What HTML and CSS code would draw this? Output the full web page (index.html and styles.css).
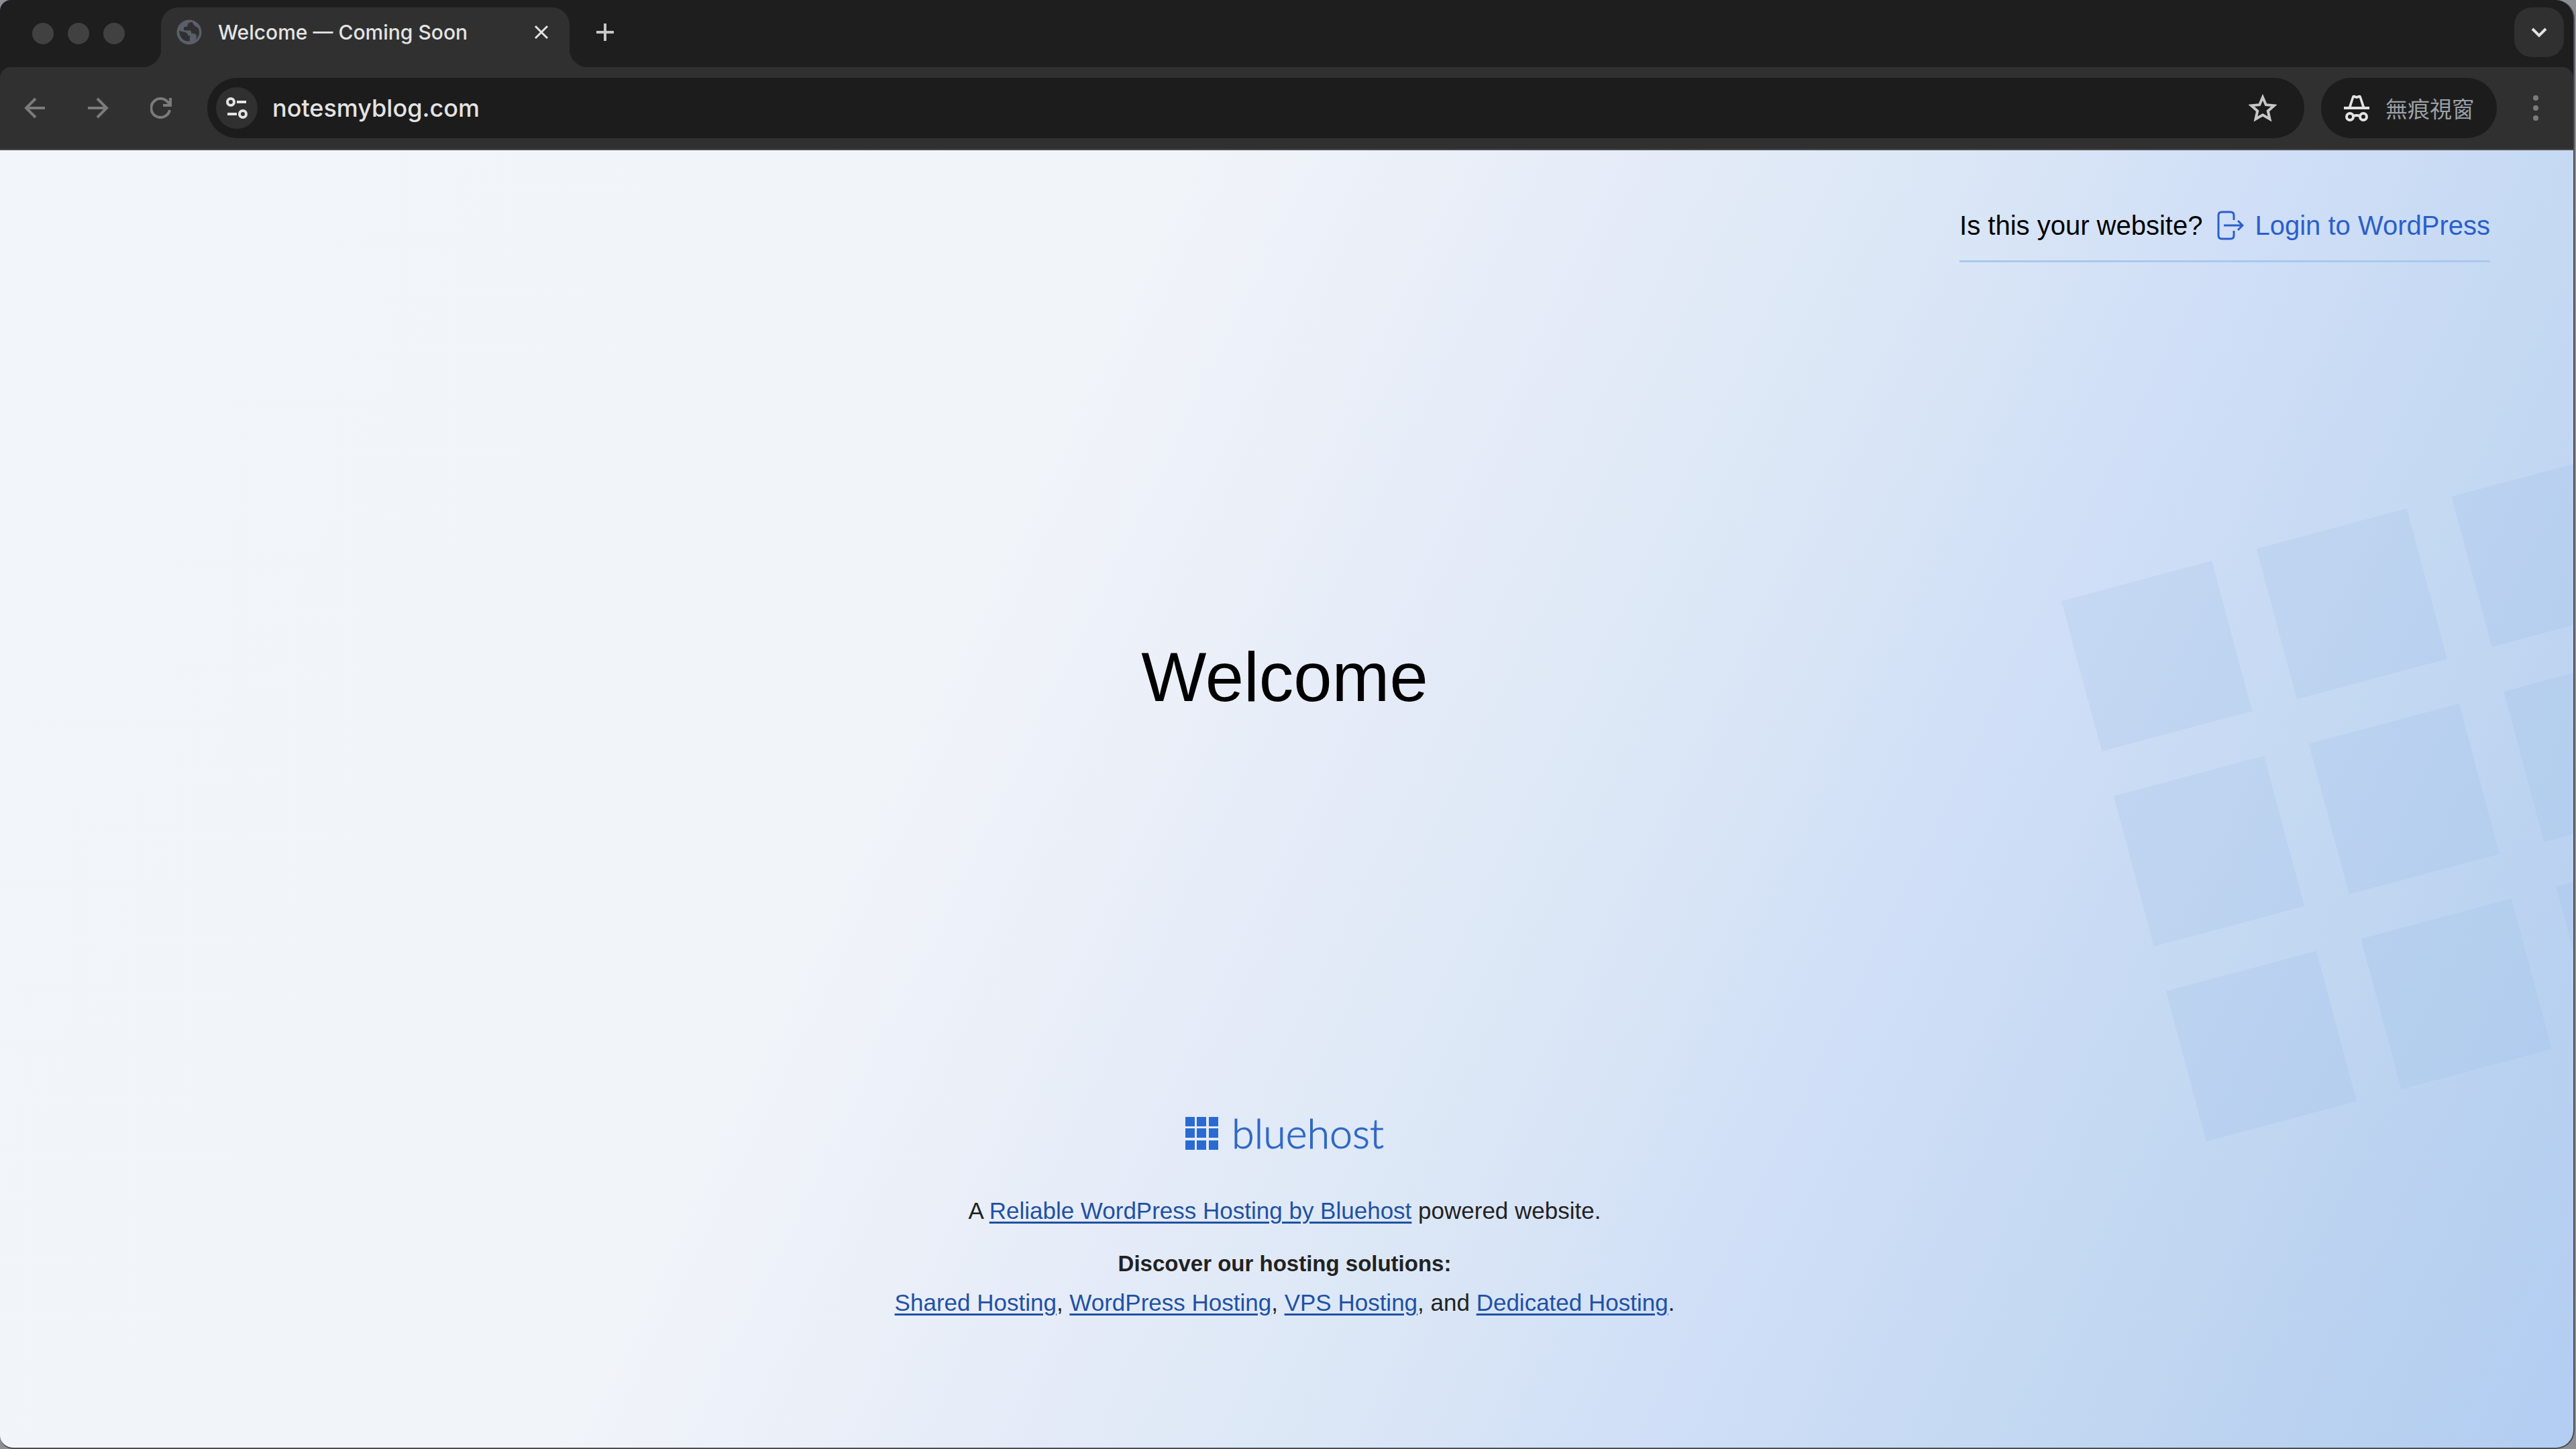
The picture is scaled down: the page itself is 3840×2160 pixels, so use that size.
FILE: index.html
```html
<!DOCTYPE html>
<html lang="en">

<head>
    <meta charset="utf-8">
    <title>Welcome — Coming Soon</title>
    <link rel="stylesheet" href="styles.css">
</head>

<body>
    <div class="window">
        <!-- tab strip -->
        <div class="tabs">
            <div class="lights">
                <span></span>
                <span></span>
                <span></span>
            </div>
            <div class="tab">
                <svg class="globe" viewBox="0 0 38 38">
                    <circle cx="19" cy="19" r="18.500" fill="#5b5f69" />
                    <path d="M4 17l9 2q4 1 4 5h3v8q-8 2-13-5q-3-5-3-10zM24 4q-6 0-7 3l-1 4q-5-1-5 2v3q5 1 9 0q3 2 2 5q7-1 8 4q0 4-3 6q7-4 7-12q0-4-2-7q-3 0-5-3q-3-2-3-5z" fill="#303030" />
                </svg>
                <span class="tab-title">Welcome — Coming Soon</span>
                <button class="tab-close" aria-label="Close tab">
                    <svg viewBox="0 0 22 22"><path d="M2 2l18 18M20 2L2 20" /></svg>
                </button>
            </div>
            <button class="new-tab" aria-label="New tab">
                <svg viewBox="0 0 28 28"><path d="M14 1v26M1 14h26" /></svg>
            </button>
            <button class="tab-search" aria-label="Search tabs">
                <svg viewBox="0 0 24 16"><path d="M2 3l10 10L22 3" /></svg>
            </button>
        </div>

        <!-- toolbar -->
        <div class="toolbar">
            <button class="nav" aria-label="Back">
                <svg viewBox="0 0 32 32"><path d="M31 16H3M17 2L3 16l14 14" /></svg>
            </button>
            <button class="nav" aria-label="Forward">
                <svg viewBox="0 0 32 32"><path d="M1 16h28M15 2l14 14-14 14" /></svg>
            </button>
            <button class="nav" aria-label="Reload">
                <svg viewBox="0 0 32 32"><path d="M29 19A14 14 0 1 1 26 7l4 4M30 1v11H19" /></svg>
            </button>
            <div class="omnibox">
                <button class="site-info" aria-label="Site information">
                    <svg viewBox="0 0 32 32"><circle cx="7" cy="7" r="5" /><path d="M16 7h14M2 25h14" /><circle cx="25" cy="25" r="5" /></svg>
                </button>
                <input class="url" type="text" value="notesmyblog.com" aria-label="Address">
                <button class="star" aria-label="Bookmark">
                    <svg viewBox="0 0 42 42"><path d="M21 5l4.800 11.200 12.200 1.100-9.200 8.100 2.700 12L21 31.200l-10.500 6.200 2.700-12L4 17.300l12.200-1.100z" /></svg>
                </button>
            </div>
            <button class="incognito">
                <svg viewBox="0 0 38 40">
                    <path class="fill" fill-rule="evenodd" d="M0 18h7l5-15q1-3 4-2l3 1 3-1q3-1 4 2l5 15h7v4H0zM11 18h16L23 5l-4 1-4-1z" />
                    <circle cx="9" cy="33" r="5" /><circle cx="29" cy="33" r="5" />
                    <path d="M14 32q5-2 10 0" />
                </svg>
                <span>無痕視窗</span>
            </button>
            <button class="menu" aria-label="Menu">
                <svg viewBox="0 0 8 38"><circle cx="4" cy="4" r="4" /><circle cx="4" cy="19" r="4" /><circle cx="4" cy="34" r="4" /></svg>
            </button>
        </div>

        <!-- coming soon page -->
        <div class="page">
            <svg class="pattern" viewBox="0 0 1022 1022">
                <g transform="translate(0 216) rotate(-15)">
                    <path d="M0 0h232v232H0zM301 0h232v232H301zM602 0h232v232H602zM0 301h232v232H0zM301 301h232v232H301zM602 301h232v232H602zM0 602h232v232H0zM301 602h232v232H301zM602 602h232v232H602z" />
                </g>
            </svg>
            <header class="login">
                <span>Is this your website?</span>
                <a href="#">
                    <svg viewBox="0 0 40 44"><path d="M25 14V7q0-5-5-5H7Q2 2 2 7v30q0 5 5 5h13q5 0 5-5v-7M10 22h28M31 15l7 7-7 7" /></svg>
                    Login to WordPress
                </a>
            </header>
            <main>
                <h1>Welcome</h1>
            </main>
            <footer>
                <a class="logo" href="#">
                    <svg viewBox="0 0 49 49"><path d="M0 0h14v14H0zM17 0h14v14H17zM35 0h14v14H35zM0 17h14v14H0zM17 17h14v14H17zM35 17h14v14H35zM0 35h14v14H0zM17 35h14v14H17zM35 35h14v14H35z" /></svg>
                    <span>bluehost</span>
                </a>
                <p class="powered">A <a href="#">Reliable WordPress Hosting by Bluehost</a> powered website.</p>
                <p><strong>Discover our hosting solutions:</strong></p>
                <p><a href="#">Shared Hosting</a>, <a href="#">WordPress Hosting</a>, <a href="#">VPS Hosting</a>, and <a href="#">Dedicated Hosting</a>.</p>
            </footer>
        </div>
    </div>
</body>

</html>
```

FILE: styles.css
```css
* {
    box-sizing: border-box;
}

body {
    margin: 0;
    background: #8e8f95;
    font-family: "Liberation Sans", Arial, sans-serif;
}

button {
    display: flex;
    align-items: center;
    justify-content: center;
    padding: 0;
    border: 0;
    background: none;
    flex: none;
}

svg {
    display: block;
    flex: none;
    fill: none;
    stroke-width: 4px;
}

.window {
    display: flex;
    flex-direction: column;
    min-height: 100vh;
    margin-right: 2px;
    border-right: 2px solid #4b4d52;
    border-bottom: 2px solid #4b4d52;
    border-radius: 16px 28px 28px 20px;
    background: #1e1e1e;
    overflow: hidden;
}

/* tab strip */
.tabs {
    display: flex;
    align-items: flex-start;
    height: 100px;
    padding: 11px 14px 0 48px;
    font-family: Inter, sans-serif;
}

.lights {
    display: flex;
    gap: 21px;
    width: 192px;
    padding-top: 23px;
}

.lights span {
    width: 32px;
    height: 32px;
    border-radius: 50%;
    background: #414141;
}

.tab {
    position: relative;
    display: flex;
    align-items: center;
    width: 609px;
    height: 89px;
    padding: 0 31px 15px 23px;
    border-radius: 26px 26px 0 0;
    background: #303030;
}

/* curved feet of the tab */
.tab::before,
.tab::after {
    content: "";
    position: absolute;
    bottom: 0;
    width: 28px;
    height: 28px;
}

.tab::before {
    right: 100%;
    background: radial-gradient(circle at 0 0, #1e1e1e 28px, #303030 29px);
}

.tab::after {
    left: 100%;
    background: radial-gradient(circle at 100% 0, #1e1e1e 28px, #303030 29px);
}

.globe {
    width: 38px;
    height: 38px;
}

.tab-title {
    flex: 1;
    margin-left: 24px;
    color: #e3e3e3;
    font-size: 30px;
    font-weight: 500;
    white-space: nowrap;
}

.tab-close svg {
    width: 22px;
    height: 22px;
    stroke: #e3e3e3;
    stroke-width: 3px;
}

.new-tab {
    margin: 23px auto 0 39px;
}

.new-tab svg {
    width: 28px;
    height: 28px;
    stroke: #c7c7c7;
}

.tab-search {
    width: 74px;
    height: 74px;
    border-radius: 26px;
    background: #303030;
}

.tab-search svg {
    width: 24px;
    height: 16px;
    stroke: #e3e3e3;
}

/* toolbar */
.toolbar {
    display: flex;
    align-items: center;
    height: 124px;
    border-bottom: 2px solid #4a4a4a;
    padding: 0 30px 0 5px;
    border-radius: 16px 16px 0 0;
    background: #303030;
}

.nav {
    width: 94px;
    height: 90px;
}

.nav svg {
    width: 32px;
    height: 32px;
    stroke: #7b7b7b;
}

.omnibox {
    display: flex;
    flex: 1;
    align-items: center;
    height: 90px;
    margin: 0 25px 0 22px;
    padding: 0 41px 0 13px;
    border-radius: 45px;
    background: #1c1c1c;
}

.site-info {
    width: 62px;
    height: 62px;
    border-radius: 50%;
    background: #303030;
}

.site-info svg {
    width: 32px;
    height: 32px;
    stroke: #e3e3e3;
}

.url {
    flex: 1;
    margin-left: 22px;
    padding: 0;
    border: 0;
    outline: 0;
    background: none;
    color: #e3e3e3;
    font: 500 36px Inter, sans-serif;
}

.star svg {
    width: 42px;
    height: 42px;
    stroke: #c7c7c7;
}

.incognito {
    gap: 24px;
    width: 262px;
    height: 90px;
    border-radius: 45px;
    background: #1c1c1c;
    color: #9aa0a6;
    font: 33px "Noto Sans CJK TC", sans-serif;
}

.incognito svg {
    width: 38px;
    height: 40px;
    stroke: #e3e3e3;
}

.incognito .fill {
    fill: #e3e3e3;
    stroke: none;
}

.menu {
    margin-left: 54px;
    padding: 0 22px 0 0;
}

.menu svg {
    width: 8px;
    height: 38px;
    fill: #7b7b7b;
}

/* page */
.page {
    position: relative;
    display: flex;
    flex: 1;
    flex-direction: column;
    padding-right: 6px;
    overflow: hidden;
    background: linear-gradient(116deg, #f2f5f9 0%, #f1f4f9 37%, #e6ecf8 50%, #dbe7f6 61%, #d0dff7 71%, #c5d9f2 81%, #b8d1f0 93%, #b3cdf3 100%);
}

.pattern {
    position: absolute;
    top: 0;
    bottom: 0;
    right: -259px;
    width: 1022px;
    margin: auto 0;
    fill: #8fb5e4;
    fill-opacity: .16;
}

.login {
    position: relative;
    display: flex;
    gap: 22px;
    align-self: flex-end;
    margin: 89px 118px 0 0;
    padding-bottom: 29px;
    border-bottom: 3px solid #aac8ee;
    color: #000;
    font-size: 40px;
    line-height: 46px;
}

.login a {
    display: flex;
    gap: 16px;
    align-items: center;
    color: #2b5fcb;
    text-decoration: none;
}

.login svg {
    width: 40px;
    height: 44px;
    stroke: #2b5fcb;
    stroke-width: 3px;
}

main {
    display: flex;
    flex: 1;
    align-items: center;
    justify-content: center;
    padding-bottom: 28px;
}

h1 {
    margin: 0;
    color: #000;
    font-size: 103px;
    font-weight: normal;
}

footer {
    position: relative;
    padding-bottom: 187px;
    color: #222;
    font-size: 35px;
    line-height: 58px;
    text-align: center;
}

footer p {
    margin: 0;
}

footer p a {
    color: #1f51a5;
    text-decoration-thickness: 3px;
    text-underline-offset: 4px;
}

footer strong {
    font-size: 33px;
}

footer .powered {
    margin-bottom: 20px;
}

.logo {
    display: flex;
    gap: 20px;
    align-items: center;
    justify-content: center;
    margin-bottom: 55px;
    color: #2f68c5;
    font: 300 61px/64px Lato, sans-serif;
    text-decoration: none;
    -webkit-text-stroke: 1px #2f68c5;
}

.logo svg {
    width: 49px;
    height: 49px;
    fill: #2a6bd3;
}
```
